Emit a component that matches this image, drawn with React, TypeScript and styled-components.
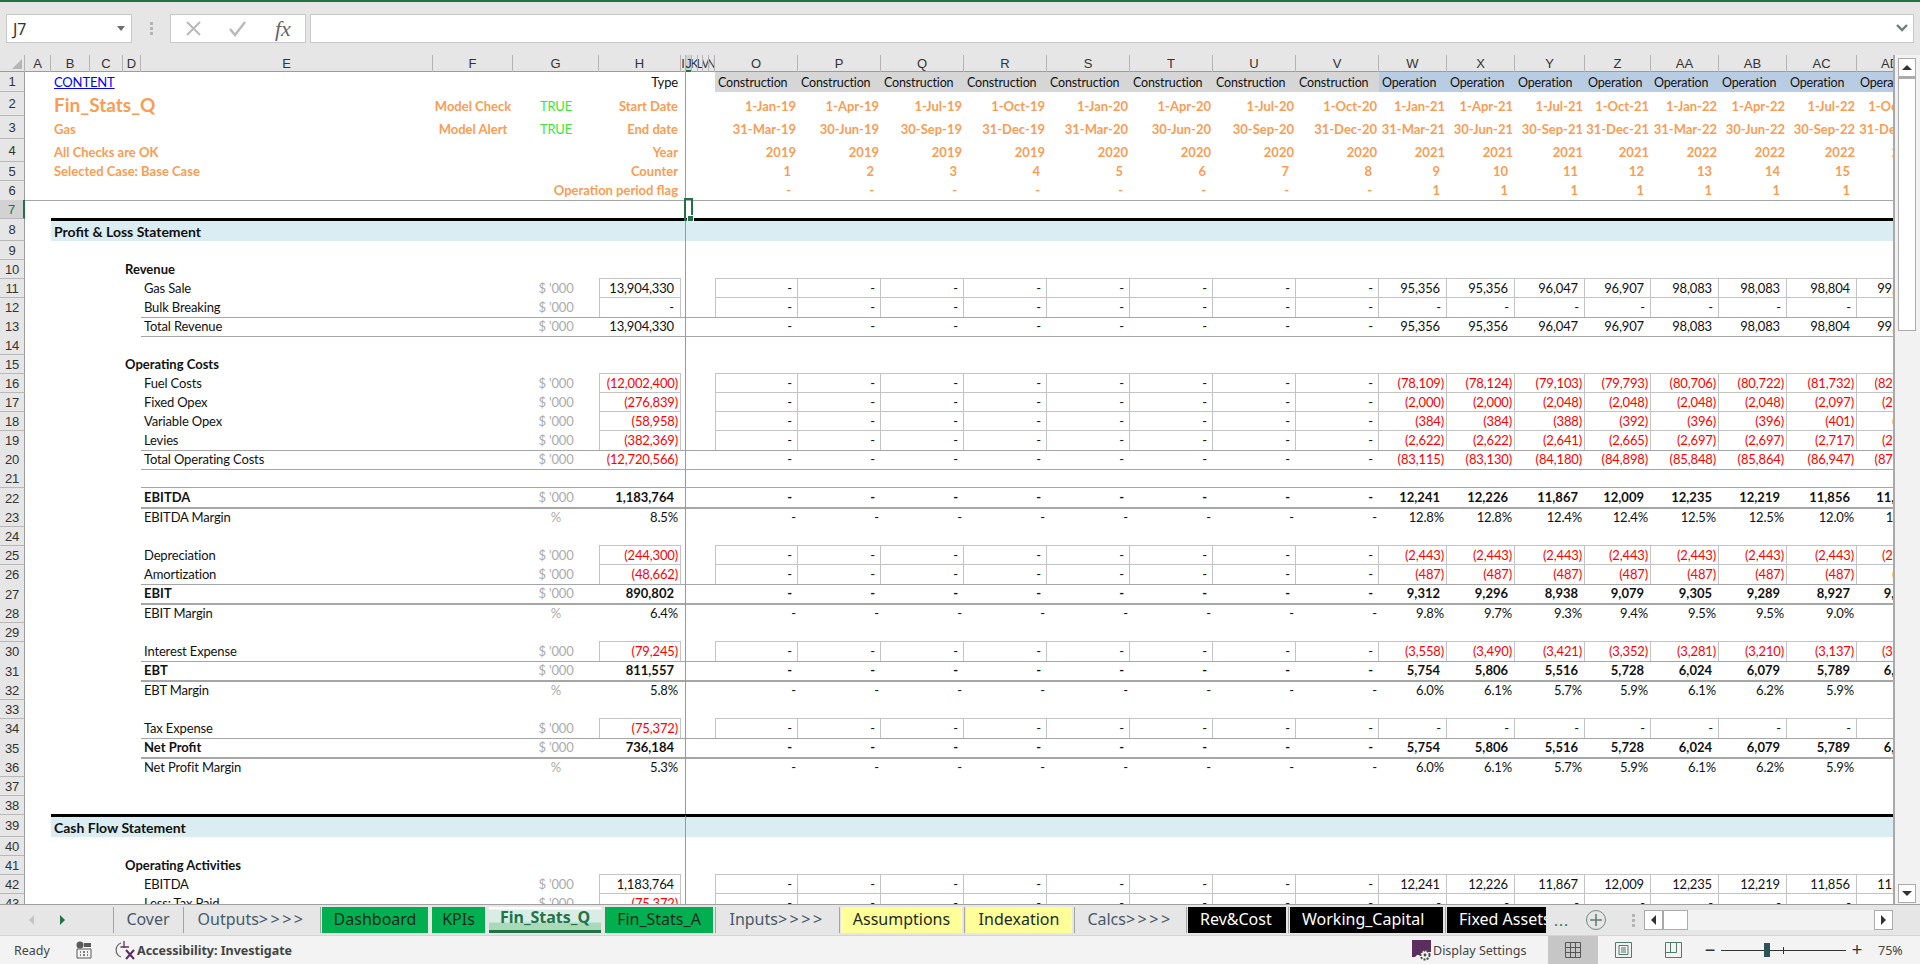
import React from 'react';
import styled, { createGlobalStyle } from 'styled-components';

const SHEET_FONT = `"Lato", "Liberation Sans", sans-serif`;
const UI_FONT = `"Noto Sans", "Open Sans", sans-serif`;
const ORANGE = '#f99d55';
const RED = '#ff0000';
const RULE = '#a6a6a6';
const BOX = '#c4c4c4';

type Col = { id: string; w: number };

const COLS: Col[] = [
	{ id: 'A', w: 26 },
	{ id: 'B', w: 39 },
	{ id: 'C', w: 33 },
	{ id: 'D', w: 18 },
	{ id: 'E', w: 292 },
	{ id: 'F', w: 80 },
	{ id: 'G', w: 86 },
	{ id: 'H', w: 82 },
	{ id: 'I', w: 5 },
	{ id: 'J', w: 6 },
	{ id: 'K', w: 6 },
	{ id: 'L', w: 5 },
	{ id: 'M', w: 6 },
	{ id: 'N', w: 6 },
	{ id: 'O', w: 83 },
	{ id: 'P', w: 83 },
	{ id: 'Q', w: 83 },
	{ id: 'R', w: 83 },
	{ id: 'S', w: 83 },
	{ id: 'T', w: 83 },
	{ id: 'U', w: 83 },
	{ id: 'V', w: 83 },
	{ id: 'W', w: 68 },
	{ id: 'X', w: 68 },
	{ id: 'Y', w: 70 },
	{ id: 'Z', w: 66 },
	{ id: 'AA', w: 68 },
	{ id: 'AB', w: 68 },
	{ id: 'AC', w: 70 },
	{ id: 'AD', w: 67 },
];

const TRACKS = `25px ${COLS.map((c) => `${c.w}px`).join(' ')}`;
const TIMELINE = COLS.slice(14).map((c) => c.id);
const RULED_FROM = 4;

type CellSpec = {
	text: string;
	align?: 'left' | 'right' | 'center';
	pad?: number;
	color?: string;
	bold?: boolean;
	size?: number;
	lift?: number;
	link?: boolean;
	fill?: string;
	box?: boolean;
};

type RowSpec = {
	n: number;
	h: number;
	rule?: 'thin' | 'thick' | 'all';
	band?: boolean;
	cells: Record<string, CellSpec>;
};

const padFor = (text: string, percent: boolean) => {
	if (percent) return 3;
	if (text.startsWith('(')) return 3;
	return 7;
};

const figure = (text: string, opts: { bold?: boolean; percent?: boolean; box?: boolean }): CellSpec => ({
	text,
	align: 'right',
	pad: padFor(text, !!opts.percent),
	color: text.startsWith('(') ? RED : '#111',
	bold: opts.bold,
	box: opts.box,
});

const dataRow = (
	n: number,
	h: number,
	label: string,
	total: string,
	values: string[] | null,
	opts: { bold?: boolean; box?: boolean; percent?: boolean; rule?: 'thin' | 'thick' } = {},
): RowSpec => {
	const cells: Record<string, CellSpec> = {
		E: { text: label, pad: 3, bold: opts.bold, color: '#111' },
		G: { text: opts.percent ? '%' : "$ '000", align: 'center', color: '#ababab' },
		H: figure(total, { ...opts, box: opts.box }),
	};
	TIMELINE.forEach((id, i) => {
		const text = i < 8 ? '-' : values ? values[i - 8] : '-';
		cells[id] = figure(text, { ...opts, box: opts.box });
		if (opts.percent && i < 8) cells[id].pad = 2;
		if (text === '-' && !opts.percent) cells[id].pad = 6;
	});
	return { n, h, rule: opts.rule, cells };
};

const blankRow = (n: number, h = 19, rule?: 'thin'): RowSpec => ({ n, h, rule, cells: {} });

const headingRow = (n: number, text: string): RowSpec => ({
	n,
	h: 19,
	cells: { D: { text, pad: 2, bold: true, color: '#111' } },
});

const bandRow = (n: number, text: string): RowSpec => ({
	n,
	h: 22,
	band: true,
	cells: { B: { text, pad: 3, bold: true, color: '#111', size: 14 } },
});

const timelineRow = (
	n: number,
	h: number,
	label: string,
	values: string[],
	pad: number,
	extra: Record<string, CellSpec> = {},
	rule?: 'all',
): RowSpec => {
	const cells: Record<string, CellSpec> = {
		...extra,
		H: { text: label, align: 'right', pad: 3, color: ORANGE, bold: true },
	};
	TIMELINE.forEach((id, i) => {
		cells[id] = { text: values[i], align: 'right', pad, color: ORANGE, bold: true };
	});
	return { n, h, rule, cells };
};

const typeCells: Record<string, CellSpec> = {
	B: { text: 'CONTENT', pad: 3, color: '#0000ff', link: true },
	H: { text: 'Type', align: 'right', pad: 3, color: '#111' },
};
TIMELINE.forEach((id, i) => {
	typeCells[id] = {
		text: i < 8 ? 'Construction' : 'Operation',
		pad: 3,
		size: 12.5,
		color: '#111',
		fill: i < 8 ? '#d6d6d6' : '#b8cce4',
	};
});

const orangeLabel = (text: string, extra: Partial<CellSpec> = {}): CellSpec => ({
	text,
	pad: 3,
	color: ORANGE,
	bold: true,
	...extra,
});
const flagLabel = (text: string): CellSpec => ({ text, align: 'center', color: ORANGE, bold: true });
const flagValue: CellSpec = { text: 'TRUE', align: 'center', color: '#38e838' };

const ROWS: RowSpec[] = [
	{ n: 1, h: 20, cells: typeCells },
	timelineRow(
		2,
		24,
		'Start Date',
		['1-Jan-19', '1-Apr-19', '1-Jul-19', '1-Oct-19', '1-Jan-20', '1-Apr-20', '1-Jul-20', '1-Oct-20', '1-Jan-21', '1-Apr-21', '1-Jul-21', '1-Oct-21', '1-Jan-22', '1-Apr-22', '1-Jul-22', '1-Oct-22'],
		2,
		{ B: orangeLabel('Fin_Stats_Q', { size: 19, lift: 2 }), F: flagLabel('Model Check'), G: flagValue },
	),
	timelineRow(
		3,
		23,
		'End date',
		['31-Mar-19', '30-Jun-19', '30-Sep-19', '31-Dec-19', '31-Mar-20', '30-Jun-20', '30-Sep-20', '31-Dec-20', '31-Mar-21', '30-Jun-21', '30-Sep-21', '31-Dec-21', '31-Mar-22', '30-Jun-22', '30-Sep-22', '31-Dec-22'],
		2,
		{ B: orangeLabel('Gas'), F: flagLabel('Model Alert'), G: flagValue },
	),
	timelineRow(
		4,
		23,
		'Year',
		['2019', '2019', '2019', '2019', '2020', '2020', '2020', '2020', '2021', '2021', '2021', '2021', '2022', '2022', '2022', '2022'],
		2,
		{ B: orangeLabel('All Checks are OK') },
	),
	timelineRow(
		5,
		19,
		'Counter',
		['1', '2', '3', '4', '5', '6', '7', '8', '9', '10', '11', '12', '13', '14', '15', '16'],
		7,
		{ B: orangeLabel('Selected Case: Base Case') },
	),
	timelineRow(
		6,
		19,
		'Operation period flag',
		['-', '-', '-', '-', '-', '-', '-', '-', '1', '1', '1', '1', '1', '1', '1', '1'],
		7,
		{},
		'all',
	),
	blankRow(7),
	bandRow(8, 'Profit & Loss Statement'),
	blankRow(9),
	headingRow(10, 'Revenue'),
	dataRow(11, 19, 'Gas Sale', '13,904,330', ['95,356', '95,356', '96,047', '96,907', '98,083', '98,083', '98,804', '99,695'], { box: true }),
	dataRow(12, 19, 'Bulk Breaking', '-', null, { box: true, rule: 'thin' }),
	dataRow(13, 19, 'Total Revenue', '13,904,330', ['95,356', '95,356', '96,047', '96,907', '98,083', '98,083', '98,804', '99,695'], { rule: 'thin' }),
	blankRow(14),
	headingRow(15, 'Operating Costs'),
	dataRow(16, 19, 'Fuel Costs', '(12,002,400)', ['(78,109)', '(78,124)', '(79,103)', '(79,793)', '(80,706)', '(80,722)', '(81,732)', '(82,754)'], { box: true }),
	dataRow(17, 19, 'Fixed Opex', '(276,839)', ['(2,000)', '(2,000)', '(2,048)', '(2,048)', '(2,048)', '(2,048)', '(2,097)', '(2,097)'], { box: true }),
	dataRow(18, 19, 'Variable Opex', '(58,958)', ['(384)', '(384)', '(388)', '(392)', '(396)', '(396)', '(401)', '(405)'], { box: true }),
	dataRow(19, 19, 'Levies', '(382,369)', ['(2,622)', '(2,622)', '(2,641)', '(2,665)', '(2,697)', '(2,697)', '(2,717)', '(2,742)'], { box: true, rule: 'thin' }),
	dataRow(20, 19, 'Total Operating Costs', '(12,720,566)', ['(83,115)', '(83,130)', '(84,180)', '(84,898)', '(85,848)', '(85,864)', '(86,947)', '(87,998)'], { rule: 'thin' }),
	blankRow(21, 19, 'thin'),
	dataRow(22, 20, 'EBITDA', '1,183,764', ['12,241', '12,226', '11,867', '12,009', '12,235', '12,219', '11,856', '11,697'], { bold: true, rule: 'thick' }),
	dataRow(23, 19, 'EBITDA Margin', '8.5%', ['12.8%', '12.8%', '12.4%', '12.4%', '12.5%', '12.5%', '12.0%', '11.8%'], { percent: true }),
	blankRow(24),
	dataRow(25, 19, 'Depreciation', '(244,300)', ['(2,443)', '(2,443)', '(2,443)', '(2,443)', '(2,443)', '(2,443)', '(2,443)', '(2,443)'], { box: true }),
	dataRow(26, 19, 'Amortization', '(48,662)', ['(487)', '(487)', '(487)', '(487)', '(487)', '(487)', '(487)', '(487)'], { box: true, rule: 'thin' }),
	dataRow(27, 20, 'EBIT', '890,802', ['9,312', '9,296', '8,938', '9,079', '9,305', '9,289', '8,927', '9,767'], { bold: true, rule: 'thick' }),
	dataRow(28, 19, 'EBIT Margin', '6.4%', ['9.8%', '9.7%', '9.3%', '9.4%', '9.5%', '9.5%', '9.0%', '9.8%'], { percent: true }),
	blankRow(29),
	dataRow(30, 19, 'Interest Expense', '(79,245)', ['(3,558)', '(3,490)', '(3,421)', '(3,352)', '(3,281)', '(3,210)', '(3,137)', '(3,064)'], { box: true, rule: 'thin' }),
	dataRow(31, 20, 'EBT', '811,557', ['5,754', '5,806', '5,516', '5,728', '6,024', '6,079', '5,789', '6,703'], { bold: true, rule: 'thick' }),
	dataRow(32, 19, 'EBT Margin', '5.8%', ['6.0%', '6.1%', '5.7%', '5.9%', '6.1%', '6.2%', '5.9%', '6.7%'], { percent: true }),
	blankRow(33),
	dataRow(34, 19, 'Tax Expense', '(75,372)', null, { box: true, rule: 'thin' }),
	dataRow(35, 20, 'Net Profit', '736,184', ['5,754', '5,806', '5,516', '5,728', '6,024', '6,079', '5,789', '6,703'], { bold: true, rule: 'thick' }),
	dataRow(36, 19, 'Net Profit Margin', '5.3%', ['6.0%', '6.1%', '5.7%', '5.9%', '6.1%', '6.2%', '5.9%', '6.7%'], { percent: true }),
	blankRow(37),
	blankRow(38),
	bandRow(39, 'Cash Flow Statement'),
	blankRow(40),
	headingRow(41, 'Operating Activities'),
	dataRow(42, 19, 'EBITDA', '1,183,764', ['12,241', '12,226', '11,867', '12,009', '12,235', '12,219', '11,856', '11,697'], { box: true }),
	dataRow(43, 19, 'Less: Tax Paid', '(75,372)', null, { box: true }),
];

const Global = createGlobalStyle`
	html, body {
		margin: 0;
		padding: 0;
		height: 100%;
		overflow: hidden;
		background: #e6e6e6;
	}
`;

const Workbook = styled.div`
	width: 1920px;
	height: 964px;
	display: flex;
	flex-direction: column;
	overflow: hidden;
	background: #e6e6e6;
`;

const AppStripe = styled.div`
	height: 2px;
	flex: none;
	background: #217346;
`;

const FormulaRow = styled.div`
	height: 53px;
	flex: none;
	box-sizing: border-box;
	padding: 12px 6px 12px 6px;
	display: flex;
	align-items: stretch;
`;

const NameBox = styled.div`
	width: 126px;
	box-sizing: border-box;
	background: #fff;
	border: 1px solid #c8c8c8;
	display: flex;
	align-items: center;
	justify-content: space-between;
	padding: 0 6px 0 6px;
	font: 16px ${UI_FONT};
	color: #333;
`;

const DropCaret = styled.span`
	width: 0;
	height: 0;
	border-left: 4px solid transparent;
	border-right: 4px solid transparent;
	border-top: 5px solid #6d6d6d;
`;

const Grip = styled.div`
	width: 38px;
	display: flex;
	flex-direction: column;
	align-items: center;
	justify-content: center;
	gap: 2px;
`;

const GripDot = styled.span`
	width: 3px;
	height: 3px;
	background: #b4b4b4;
`;

const FormulaButtons = styled.div`
	width: 136px;
	box-sizing: border-box;
	background: #fff;
	border: 1px solid #c8c8c8;
	display: flex;
	align-items: center;
	padding-left: 14px;
	gap: 26px;
`;

const FxGlyph = styled.span`
	font: italic 22px "Liberation Serif", serif;
	color: #666;
	line-height: 1;
	margin-left: 2px;
`;

const FormulaInput = styled.div`
	margin-left: 4px;
	flex: 1;
	box-sizing: border-box;
	background: #fff;
	border: 1px solid #c8c8c8;
	display: flex;
	align-items: center;
	justify-content: flex-end;
	padding-right: 5px;
`;

const Middle = styled.div`
	height: 849px;
	flex: none;
	display: flex;
`;

const Sheet = styled.div`
	width: 1895px;
	flex: none;
	overflow: hidden;
	box-sizing: border-box;
	border-right: 2px solid #a9a9a9;
	background: #fff;
`;

const ColumnHeader = styled.div`
	display: grid;
	grid-template-columns: ${TRACKS};
	width: max-content;
	height: 17px;
	background: #e6e6e6;
	box-shadow: inset 0 -1px 0 #9c9c9c;
`;

const Corner = styled.div`
	position: relative;
	box-sizing: border-box;
	border-right: 1px solid #b4b4b4;
	&::after {
		content: '';
		position: absolute;
		right: 2px;
		bottom: 3px;
		border-left: 10px solid transparent;
		border-bottom: 10px solid #b5b5b5;
	}
`;

const ColumnLetter = styled.div<{ $active?: boolean }>`
	box-sizing: border-box;
	overflow: hidden;
	display: flex;
	justify-content: center;
	align-items: center;
	font: 13px "Liberation Sans", sans-serif;
	color: #333;
	border-right: 1px solid #b4b4b4;
	background: ${(p) => (p.$active ? '#d2d2d2' : 'transparent')};
	box-shadow: ${(p) => (p.$active ? 'inset 0 -2px 0 #217346' : 'none')};
`;

const RowLine = styled.div<{ $h: number }>`
	display: grid;
	grid-template-columns: ${TRACKS};
	width: max-content;
	height: ${(p) => p.$h}px;
	font-family: ${SHEET_FONT};
	font-size: 13px;
	letter-spacing: -0.15px;
`;

const RowNumber = styled.div<{ $active?: boolean }>`
	box-sizing: border-box;
	display: flex;
	align-items: center;
	justify-content: center;
	font: 13px "Liberation Sans", sans-serif;
	color: ${(p) => (p.$active ? '#217346' : '#333')};
	background: ${(p) => (p.$active ? '#d2d2d2' : '#e6e6e6')};
	border-bottom: 1px solid #b8b8b8;
	border-right: ${(p) => (p.$active ? '2px solid #217346' : '1px solid #9c9c9c')};
`;

const ruleBorder = (rule?: string) => {
	if (rule === 'thick') return `2px solid ${RULE}`;
	if (rule) return `1px solid ${RULE}`;
	return 'none';
};

const Cell = styled.div<{
	$align?: string;
	$pad?: number;
	$color?: string;
	$bold?: boolean;
	$size?: number;
	$fill?: string;
	$rule?: string;
	$box?: boolean;
	$boxLeft?: boolean;
	$band?: boolean;
	$freeze?: boolean;
}>`
	position: relative;
	box-sizing: border-box;
	min-width: 0;
	display: flex;
	align-items: flex-end;
	justify-content: ${(p) => (p.$align === 'right' ? 'flex-end' : p.$align === 'center' ? 'center' : 'flex-start')};
	padding: 0 ${(p) => p.$pad ?? 0}px;
	white-space: nowrap;
	line-height: 19px;
	color: ${(p) => p.$color ?? '#111'};
	font-weight: ${(p) => (p.$bold ? 700 : 400)};
	letter-spacing: ${(p) => (p.$bold ? '0' : 'inherit')};
	font-size: ${(p) => (p.$size ? `${p.$size}px` : 'inherit')};
	background: ${(p) => (p.$band ? '#daedf3' : p.$fill ?? 'transparent')};
	border-bottom: ${(p) => ruleBorder(p.$rule)};
	border-top: ${(p) => (p.$band ? '2px solid #000' : 'none')};
	border-right: ${(p) => (p.$freeze ? '1px solid #9a9a9a' : 'none')};
	box-shadow: ${(p) => {
		const parts: string[] = [];
		if (p.$band) parts.push('0 -1px 0 #000');
		if (p.$box) {
			parts.push(`0 -1px 0 ${BOX}`, `inset -1px 0 0 ${BOX}`);
			if (!p.$rule) parts.push(`inset 0 -1px 0 ${BOX}`);
			if (p.$boxLeft) parts.push(`inset 1px 0 0 ${BOX}`);
		}
		return parts.length ? parts.join(', ') : 'none';
	}};
`;

// a label runs on over the empty cells to its right, as in a spreadsheet
const CellText = styled.span<{ $link?: boolean; $lift?: number }>`
	position: relative;
	z-index: 1;
	margin-bottom: ${(p) => p.$lift ?? 0}px;
	text-decoration: ${(p) => (p.$link ? 'underline' : 'none')};
`;

const SelectionBox = styled.div`
	position: absolute;
	left: -2px;
	right: -1px;
	top: -2px;
	bottom: -2px;
	border: 2px solid #217346;
	z-index: 3;
	&::after {
		content: '';
		position: absolute;
		right: -3px;
		bottom: -3px;
		width: 5px;
		height: 5px;
		background: #217346;
		border: 1px solid #fff;
	}
`;

const ScrollRail = styled.div`
	flex: 1;
	display: flex;
	flex-direction: column;
	box-sizing: border-box;
	padding: 3px 4px 1px 3px;
	background: #f2f2f2;
`;

const RailButton = styled.div`
	height: 19px;
	flex: none;
	box-sizing: border-box;
	background: #fff;
	border: 1px solid #ababab;
	display: flex;
	align-items: center;
	justify-content: center;
`;

const Triangle = styled.span<{ $dir: 'up' | 'down' | 'left' | 'right'; $color?: string }>`
	width: 0;
	height: 0;
	${(p) => {
		const c = p.$color ?? '#333';
		if (p.$dir === 'up') return `border-left:5px solid transparent;border-right:5px solid transparent;border-bottom:5px solid ${c};`;
		if (p.$dir === 'down') return `border-left:5px solid transparent;border-right:5px solid transparent;border-top:5px solid ${c};`;
		if (p.$dir === 'left') return `border-top:5px solid transparent;border-bottom:5px solid transparent;border-right:5px solid ${c};`;
		return `border-top:5px solid transparent;border-bottom:5px solid transparent;border-left:5px solid ${c};`;
	}}
`;

const RailThumb = styled.div`
	height: 254px;
	flex: none;
	box-sizing: border-box;
	background: #fff;
	border: 1px solid #ababab;
	border-top-width: 2px;
`;

const RailSpace = styled.div`
	flex: 1;
`;

const TabBar = styled.div`
	height: 32px;
	flex: none;
	box-sizing: border-box;
	border-top: 1px solid #a0a0a0;
	border-bottom: 1px solid #d4d4d4;
	background: #e6e6e6;
	display: flex;
	align-items: stretch;
	font-family: ${UI_FONT};
`;

const TabNav = styled.div`
	width: 113px;
	flex: none;
	display: flex;
	align-items: center;
	padding-left: 29px;
	box-sizing: border-box;
	gap: 26px;
`;

const TabSlot = styled.div<{ $w: number; $line?: boolean }>`
	width: ${(p) => p.$w}px;
	flex: none;
	box-sizing: border-box;
	padding: 2px 2px 2px 2px;
	position: relative;
	&::before {
		content: ${(p) => (p.$line ? "''" : 'none')};
		position: absolute;
		left: 0;
		top: 2px;
		bottom: 2px;
		width: 1px;
		background: #a3a3a3;
	}
`;

const tabBackground = (tone: string) => {
	if (tone === 'green') return '#00b050';
	if (tone === 'yellow') return '#ffff99';
	if (tone === 'black') return '#000';
	if (tone === 'active') return 'linear-gradient(#ffffff 0, #ffffff 2px, #d9ece6 3px, #d9ece6 15px, #aad9b9 16px, #aad9b9 22px)';
	return 'transparent';
};

const tabColor = (tone: string) => {
	if (tone === 'black') return '#fff';
	if (tone === 'active') return '#217346';
	if (tone === 'plain') return '#46596a';
	return '#1c2a20';
};

const TabFace = styled.div<{ $tone: string }>`
	height: 26px;
	box-sizing: border-box;
	overflow: hidden;
	display: flex;
	align-items: center;
	justify-content: ${(p) => (p.$tone === 'black' ? 'flex-start' : 'center')};
	padding: ${(p) => (p.$tone === 'black' ? '0 0 3px 12px' : '0 0 3px 0')};
	white-space: nowrap;
	font-size: 16px;
	font-weight: ${(p) => (p.$tone === 'active' ? 700 : 400)};
	color: ${(p) => tabColor(p.$tone)};
	background: ${(p) => tabBackground(p.$tone)};
	border-bottom: ${(p) => (p.$tone === 'active' ? '3px solid #217346' : 'none')};
`;

const TabArrows = styled.span`
	letter-spacing: 2.5px;
`;

const TabMore = styled.div`
	width: 22px;
	flex: none;
	margin-left: 6px;
	display: flex;
	align-items: center;
	color: #217346;
	font-size: 15px;
	letter-spacing: 1px;
`;

const AddSheet = styled.div`
	width: 20px;
	height: 20px;
	flex: none;
	align-self: center;
	margin-left: 10px;
	box-sizing: border-box;
	border: 1px solid #6f8a80;
	border-radius: 50%;
	display: flex;
	align-items: center;
	justify-content: center;
`;

const TabGrip = styled.div`
	margin-left: 16px;
	width: 22px;
	flex: none;
	display: flex;
	flex-direction: column;
	align-items: center;
	justify-content: center;
	gap: 2px;
`;

const HScroll = styled.div`
	width: 249px;
	height: 20px;
	align-self: center;
	flex: none;
	display: flex;
	background: #f2f2f2;
`;

const HButton = styled.div<{ $w: number; $line?: boolean }>`
	width: ${(p) => p.$w}px;
	box-sizing: border-box;
	background: #fff;
	border: 1px solid #ababab;
	display: flex;
	align-items: center;
	justify-content: center;
`;

const HSpace = styled.div`
	flex: 1;
`;

const StatusBar = styled.div`
	flex: 1;
	display: flex;
	align-items: center;
	background: #f3f3f3;
	font-family: ${UI_FONT};
	font-size: 12.5px;
	color: #444;
	padding-left: 14px;
`;

const StatusText = styled.span<{ $bold?: boolean; $w?: number; $ml?: number }>`
	font-weight: ${(p) => (p.$bold ? 700 : 400)};
	white-space: nowrap;
	margin-left: ${(p) => p.$ml ?? 0}px;
	${(p) => (p.$w ? `width:${p.$w}px;flex:none;` : '')}
`;

const StatusIcon = styled.span<{ $ml: number }>`
	margin-left: ${(p) => p.$ml}px;
	display: inline-flex;
	flex: none;
`;

const StatusSpacer = styled.div`
	flex: 1;
`;

const ViewButton = styled.div<{ $active?: boolean; $ml?: number }>`
	width: 50px;
	align-self: stretch;
	flex: none;
	margin-left: ${(p) => p.$ml ?? 0}px;
	display: flex;
	align-items: center;
	justify-content: center;
	background: ${(p) => (p.$active ? '#c6c6c6' : 'transparent')};
`;

const ZoomControl = styled.div`
	width: 159px;
	margin-left: 6px;
	display: flex;
	align-items: center;
	flex: none;
	position: relative;
`;

const ZoomSign = styled.span`
	font: 18px "Liberation Sans", sans-serif;
	color: #333;
	line-height: 1;
	width: 12px;
	text-align: center;
`;

const ZoomTrack = styled.div`
	width: 125px;
	height: 1px;
	margin: 0 5px;
	background: #333;
	position: relative;
`;

const ZoomThumb = styled.span`
	position: absolute;
	left: 43px;
	top: -7px;
	width: 6px;
	height: 14px;
	background: #2f5458;
`;

const ZoomTick = styled.span`
	position: absolute;
	left: 62px;
	top: -3px;
	width: 1px;
	height: 7px;
	background: #333;
`;

const TABS = [
	{ name: 'Cover', w: 70, tone: 'plain', line: true },
	{ name: 'Outputs', arrows: true, w: 137, tone: 'plain', line: true },
	{ name: 'Dashboard', w: 110, tone: 'green', line: true },
	{ name: 'KPIs', w: 57, tone: 'green' },
	{ name: 'Fin_Stats_Q', w: 116, tone: 'active' },
	{ name: 'Fin_Stats_A', w: 112, tone: 'green' },
	{ name: 'Inputs', arrows: true, w: 124, tone: 'plain', line: true },
	{ name: 'Assumptions', w: 125, tone: 'yellow', line: true },
	{ name: 'Indexation', w: 110, tone: 'yellow', line: true },
	{ name: 'Calcs', arrows: true, w: 112, tone: 'plain', line: true },
	{ name: 'Rev&Cost', w: 102, tone: 'black', line: true },
	{ name: 'Working_Capital', w: 157, tone: 'black', line: true },
	{ name: 'Fixed Assets', w: 103, tone: 'black', line: true },
];

const SheetRow: React.FC<{ row: RowSpec }> = ({ row }) => (
	<RowLine $h={row.h}>
		<RowNumber $active={row.n === 7}>{row.n}</RowNumber>
		{COLS.map((col, i) => {
			const spec = row.cells[col.id];
			const bandOn = row.band && i >= 1;
			const rule = row.rule === 'all' ? 'thin' : i >= RULED_FROM ? row.rule : undefined;
			return (
				<Cell
					key={col.id}
					$align={spec?.align}
					$pad={spec?.pad}
					$color={spec?.color}
					$bold={spec?.bold}
					$size={spec?.size}
					$fill={spec?.fill}
					$rule={rule}
					$box={spec?.box}
					$boxLeft={spec?.box && (col.id === 'H' || col.id === 'O')}
					$band={bandOn}
					$freeze={col.id === 'I'}
				>
					{spec && (
						<CellText $link={spec.link} $lift={spec.lift}>
							{spec.text}
						</CellText>
					)}
					{row.n === 7 && col.id === 'J' && <SelectionBox />}
				</Cell>
			);
		})}
	</RowLine>
);

const App: React.FC = () => (
	<Workbook>
		<Global />
		<AppStripe />
		<FormulaRow>
			<NameBox>
				J7
				<DropCaret />
			</NameBox>
			<Grip>
				<GripDot />
				<GripDot />
				<GripDot />
			</Grip>
			<FormulaButtons>
				<svg width="17" height="17" viewBox="0 0 17 17">
					<path d="M2 2 L15 15 M15 2 L2 15" stroke="#b9b9b9" strokeWidth="2" fill="none" />
				</svg>
				<svg width="19" height="17" viewBox="0 0 19 17">
					<path d="M2 9 L7 15 L17 2" stroke="#b9b9b9" strokeWidth="2.4" fill="none" />
				</svg>
				<FxGlyph>fx</FxGlyph>
			</FormulaButtons>
			<FormulaInput>
				<svg width="12" height="9" viewBox="0 0 12 9">
					<path d="M1 1 L6 6 L11 1" stroke="#6b8079" strokeWidth="2.4" fill="none" />
				</svg>
			</FormulaInput>
		</FormulaRow>
		<Middle>
			<Sheet>
				<ColumnHeader>
					<Corner />
					{COLS.map((col) => (
						<ColumnLetter key={col.id} $active={col.id === 'J'}>
							{col.id}
						</ColumnLetter>
					))}
				</ColumnHeader>
				{ROWS.map((row) => (
					<SheetRow key={row.n} row={row} />
				))}
			</Sheet>
			<ScrollRail>
				<RailButton>
					<Triangle $dir="up" />
				</RailButton>
				<RailThumb />
				<RailSpace />
				<RailButton>
					<Triangle $dir="down" />
				</RailButton>
			</ScrollRail>
		</Middle>
		<TabBar>
			<TabNav>
				<Triangle $dir="left" $color="#c4c4c4" />
				<Triangle $dir="right" $color="#217346" />
			</TabNav>
			{TABS.map((tab) => (
				<TabSlot key={tab.name} $w={tab.w} $line={tab.line}>
					<TabFace $tone={tab.tone}>
						{tab.name}
						{tab.arrows && <TabArrows>&gt;&gt;&gt;&gt;</TabArrows>}
					</TabFace>
				</TabSlot>
			))}
			<TabMore>...</TabMore>
			<AddSheet>
				<svg width="12" height="12" viewBox="0 0 12 12">
					<path d="M6 0 V12 M0 6 H12" stroke="#5f7f75" strokeWidth="1.6" />
				</svg>
			</AddSheet>
			<TabGrip>
				<GripDot />
				<GripDot />
				<GripDot />
			</TabGrip>
			<HScroll>
				<HButton $w={19}>
					<Triangle $dir="left" />
				</HButton>
				<HButton $w={25} />
				<HSpace />
				<HButton $w={19}>
					<Triangle $dir="right" />
				</HButton>
			</HScroll>
		</TabBar>
		<StatusBar>
			<StatusText $w={37}>Ready</StatusText>
			<StatusIcon $ml={25}>
				<svg width="16" height="18" viewBox="0 0 16 18">
					<circle cx="4" cy="4" r="3.5" fill="#5a5a5a" />
					<path d="M8 2 H15 V6 H8 Z" fill="#5a5a5a" />
					<path d="M1 8 H15 V17 H1 Z" fill="none" stroke="#5a5a5a" />
					<path d="M4 11 H5 M7 11 H9 M11 11 H12 M4 14 H5 M7 14 H9 M11 14 H12" stroke="#5a5a5a" strokeWidth="1.4" />
				</svg>
			</StatusIcon>
			<StatusIcon $ml={23}>
				<svg width="21" height="20" viewBox="0 0 21 20">
					<path d="M6 3 A7.5 7.5 0 0 0 6 17" fill="none" stroke="#666" strokeWidth="1.2" />
					<path d="M9 1 V8 M5.5 7 H14" stroke="#5c3566" strokeWidth="1.3" />
					<path d="M11 10 L19 19 M19 10 L11 19" stroke="#5c2d5f" strokeWidth="2" />
				</svg>
			</StatusIcon>
			<StatusText $bold $ml={1}>
				Accessibility: Investigate
			</StatusText>
			<StatusSpacer />
			<svg width="22" height="22" viewBox="0 0 22 22">
				<path d="M1 1 H20 V13 H13 V16 H6 L4 18 H1 Z" fill="#5c2d5f" />
				<circle cx="14" cy="16" r="4.5" fill="#f3f3f3" stroke="#4a4a4a" strokeWidth="2" strokeDasharray="2 1.2" />
				<circle cx="14" cy="16" r="1.4" fill="#4a4a4a" />
			</svg>
			<StatusText $w={115}>Display Settings</StatusText>
			<ViewButton $active>
				<svg width="16" height="16" viewBox="0 0 16 16">
					<path d="M0.5 0.5 H15.5 V15.5 H0.5 Z M5.5 0.5 V15.5 M10.5 0.5 V15.5 M0.5 5.5 H15.5 M0.5 10.5 H15.5" fill="none" stroke="#555" />
				</svg>
			</ViewButton>
			<ViewButton>
				<svg width="17" height="16" viewBox="0 0 17 16">
					<path d="M0.5 0.5 H16.5 V15.5 H0.5 Z" fill="none" stroke="#4f7a6c" />
					<path d="M4 3.5 H13 V12.5 H4 Z M6 6 H11 M6 8 H11 M6 10 H11" fill="none" stroke="#4f7a6c" />
				</svg>
			</ViewButton>
			<ViewButton>
				<svg width="17" height="16" viewBox="0 0 17 16">
					<path d="M0.5 0.5 H16.5 V15.5 H0.5 Z M0.5 10.5 H11.5 V0.5 M5.5 0.5 V10.5" fill="none" stroke="#4f7a6c" />
				</svg>
			</ViewButton>
			<ZoomControl>
				<ZoomSign>−</ZoomSign>
				<ZoomTrack>
					<ZoomThumb />
					<ZoomTick />
				</ZoomTrack>
				<ZoomSign>+</ZoomSign>
			</ZoomControl>
			<StatusText $w={42} $ml={15}>
				75%
			</StatusText>
		</StatusBar>
	</Workbook>
);

export default App;
